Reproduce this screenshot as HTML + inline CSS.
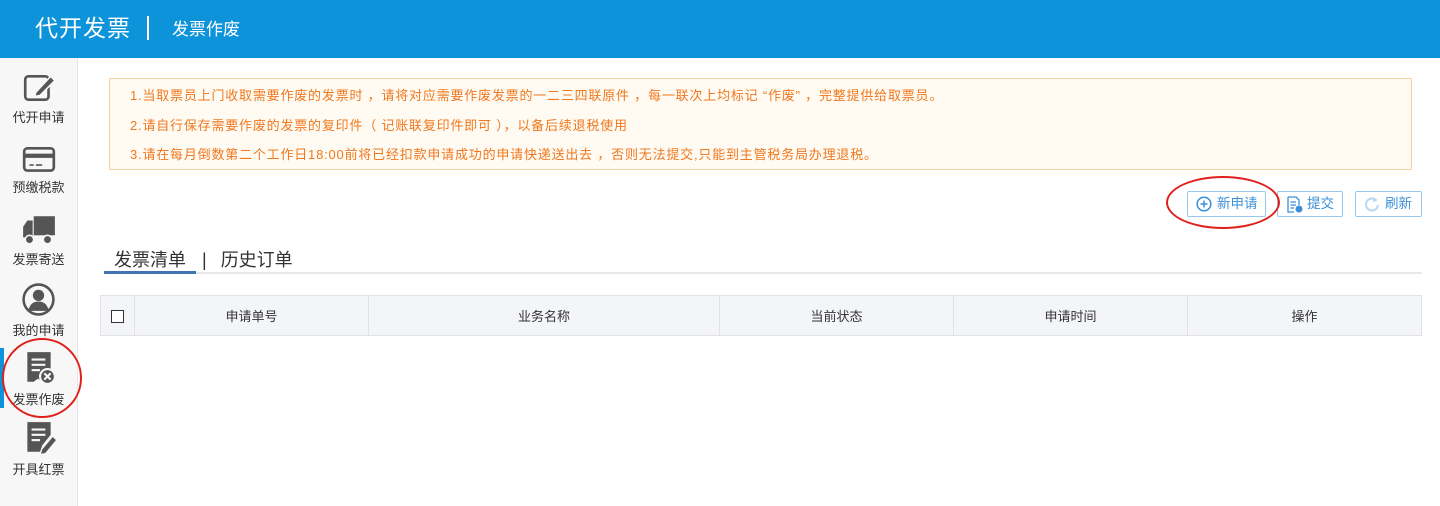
<!DOCTYPE html>
<html><head><meta charset="utf-8"><style>
*{margin:0;padding:0;box-sizing:border-box}
body{width:1440px;height:506px;background:#fff;font-family:"Liberation Sans","Microsoft YaHei","Noto Sans CJK SC",sans-serif;position:relative;overflow:hidden;color:#333}
.hdr{position:absolute;left:0;top:0;width:1440px;height:58px;background:#0d93d9;color:#fff}
.hdr .t1{position:absolute;left:35px;top:13px;font-size:23px;line-height:30px;letter-spacing:1px}
.hdr .sep{position:absolute;left:147px;top:16px;width:2px;height:24px;background:#fff}
.hdr .t2{position:absolute;left:172px;top:18px;font-size:17px;line-height:24px}
.side{position:absolute;left:0;top:58px;width:78px;height:448px;background:#f7f7f7;border-right:1px solid #e6e6e6}
.it{position:absolute;left:0;width:77px;text-align:center;font-size:13px;color:#333}
.it svg{display:block;margin:0 auto 3px}
.act{position:absolute;left:0;top:348px;width:4px;height:60px;background:#0d93d9}
.notice{position:absolute;left:109px;top:78px;width:1303px;height:92px;border:1px solid #f5cf9f;background:#fffaf2;border-radius:2px;color:#f0781e;font-size:13px;letter-spacing:0.8px}
.notice p{position:absolute;left:20px;line-height:18px}
.btn{position:absolute;top:191px;height:26px;border:1px solid #9ac8ec;border-radius:2px;color:#3a8fd8;font-size:13.5px;line-height:24px;padding-left:29px}
.btn svg{position:absolute;left:8px;top:4px}
.tabs{position:absolute;left:104px;top:246px;font-size:18px;color:#333}
.tabline{position:absolute;left:104px;top:272px;width:1318px;height:2px;background:#e8e8e8}
.tabact{position:absolute;left:104px;top:271px;width:92px;height:3px;background:#3f74b0}
table{position:absolute;left:100px;top:295px;border-collapse:collapse;font-size:13px;color:#333}
td{border:1px solid #e2e2e2;background:#f4f5f8;height:40px;text-align:center}
.ring{position:absolute;border:2px solid #e0201b;border-radius:50%}
</style></head><body>
<div class="hdr"><div class="t1">代开发票</div><div class="sep"></div><div class="t2">发票作废</div></div>
<div class="side">
 <div class="it" style="top:14px"><svg width="36" height="32" viewBox="0 0 34 30"><rect x="4" y="4" width="22" height="22" rx="3" fill="none" stroke="#555" stroke-width="2.5"/><path d="M14 19 L28 4 L32 8 L18 22 L13 23 Z" fill="#555" stroke="#f7f7f7" stroke-width="1.5"/></svg>代开申请</div>
 <div class="it" style="top:88px"><svg width="36" height="28" viewBox="0 0 34 26"><rect x="3" y="2" width="28" height="21" rx="3" fill="none" stroke="#555" stroke-width="2.5"/><rect x="3" y="7" width="28" height="4" fill="#555"/><rect x="8" y="17" width="4" height="1.5" fill="#555"/><rect x="14" y="17" width="6" height="1.5" fill="#555"/></svg>预缴税款</div>
 <div class="it" style="top:156px"><svg width="36" height="32" viewBox="0 0 34 30"><rect x="12" y="2" width="20" height="18" fill="#555"/><path d="M2 12 L6 6 L11 6 L11 22 L2 22 Z" fill="#555"/><circle cx="8" cy="24" r="4" fill="#555" stroke="#f7f7f7" stroke-width="1.5"/><circle cx="25" cy="24" r="4" fill="#555" stroke="#f7f7f7" stroke-width="1.5"/></svg>发票寄送</div>
 <div class="it" style="top:224px"><svg width="35" height="35" viewBox="0 0 34 34"><circle cx="17" cy="17" r="14.5" fill="none" stroke="#555" stroke-width="2.5"/><circle cx="17" cy="13" r="5.5" fill="#555"/><path d="M7 28 Q9 19 17 19 Q25 19 27 28 Z" fill="#555"/></svg>我的申请</div>
 <div class="it" style="top:292px"><svg width="36" height="36" viewBox="0 0 34 34"><path d="M6 2 H28 V30 L24 27 L20 30 L16 27 L12 30 L6 30 Z" fill="#555"/><rect x="10" y="8" width="13" height="2" fill="#f7f7f7"/><rect x="10" y="13" width="13" height="2" fill="#f7f7f7"/><rect x="10" y="18" width="8" height="2" fill="#f7f7f7"/><circle cx="25" cy="25" r="7" fill="#555" stroke="#f7f7f7" stroke-width="2"/><path d="M22 22 L28 28 M28 22 L22 28" stroke="#f7f7f7" stroke-width="2"/></svg>发票作废</div>
 <div class="it" style="top:362px"><svg width="36" height="36" viewBox="0 0 34 34"><path d="M6 2 H28 V14 L20 24 L18 30 H6 Z" fill="#555"/><rect x="10" y="8" width="13" height="2" fill="#f7f7f7"/><rect x="10" y="13" width="13" height="2" fill="#f7f7f7"/><rect x="10" y="18" width="8" height="2" fill="#f7f7f7"/><path d="M20 28 L30 16 L33 19 L23 31 L19 32 Z" fill="#555"/></svg>开具红票</div>
</div>
<div class="act"></div>
<div class="ring" style="left:2px;top:338px;width:80px;height:80px"></div>
<div class="notice">
 <p style="top:8px">1.当取票员上门收取需要作废的发票时 ，请将对应需要作废发票的一二三四联原件 ，每一联次上均标记 “作废” ，完整提供给取票员。</p>
 <p style="top:38px">2.请自行保存需要作废的发票的复印件（ 记账联复印件即可 ），以备后续退税使用</p>
 <p style="top:67px">3.请在每月倒数第二个工作日18:00前将已经扣款申请成功的申请快递送出去 ，否则无法提交,只能到主管税务局办理退税。</p>
</div>
<div class="btn" style="left:1187px;width:79px"><svg width="16" height="16" viewBox="0 0 16 16"><circle cx="8" cy="8" r="6.8" fill="none" stroke="#3a8fd8" stroke-width="1.5"/><path d="M8 4.5 V11.5 M4.5 8 H11.5" stroke="#3a8fd8" stroke-width="1.5"/></svg>新申请</div>
<div class="btn" style="left:1277px;width:66px"><svg width="18" height="18" viewBox="0 0 18 18"><path d="M2 1 H10 L13 4 V9" fill="none" stroke="#3a8fd8" stroke-width="1.3"/><path d="M2 1 V16 H8" fill="none" stroke="#3a8fd8" stroke-width="1.3"/><path d="M4.5 6 H10 M4.5 9 H10 M4.5 12 H8" stroke="#3a8fd8" stroke-width="1.2"/><circle cx="13" cy="13" r="3.5" fill="#3a8fd8"/></svg>提交</div>
<div class="btn" style="left:1355px;width:67px"><svg width="16" height="16" viewBox="0 0 16 16"><path d="M12.5 4.5 A6 6 0 1 0 14 9" fill="none" stroke="#b8d6f0" stroke-width="2"/><path d="M9 1 L13 4.5 L9 6" fill="#b8d6f0"/></svg>刷新</div>
<div class="ring" style="left:1166px;top:176px;width:114px;height:53px"></div>
<div class="tabs"><span style="margin-left:10px">发票清单</span><span style="margin:0 14px 0 16px">|</span><span>历史订单</span></div>
<div class="tabline"></div><div class="tabact"></div>
<table><tr>
<td style="width:34px"><span style="display:inline-block;width:13px;height:13px;border:1px solid #333;background:#fff;vertical-align:middle"></span></td>
<td style="width:234px">申请单号</td><td style="width:351px">业务名称</td><td style="width:234px">当前状态</td><td style="width:234px">申请时间</td><td style="width:234px">操作</td>
</tr></table>
</body></html>
